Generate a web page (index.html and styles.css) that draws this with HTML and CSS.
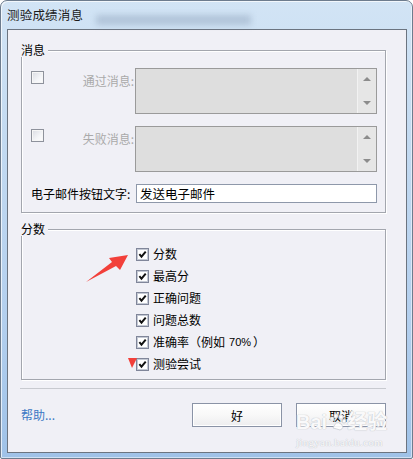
FILE: index.html
```html
<!DOCTYPE html>
<html lang="zh-CN">
<head>
    <meta charset="UTF-8">
    <title>测验成绩消息</title>
    <link rel="stylesheet" href="styles.css">
</head>
<body>
    <div class="window">
        <div class="titlebar">
            <span class="blur-bg"></span>
            <span class="title">测验成绩消息</span>
        </div>

        <div class="client">
            <div class="group group-msg">
                <div class="group-title">消息</div>
                <div class="msg-grid">
                    <div class="msg-label">
                        <span class="cb"></span>
                        <span class="disabled">通过消息:</span>
                    </div>
                    <div class="area">
                        <div class="area-bar"><span class="arr-up"></span><span class="arr-down"></span></div>
                    </div>

                    <div class="msg-label">
                        <span class="cb"></span>
                        <span class="disabled">失败消息:</span>
                    </div>
                    <div class="area">
                        <div class="area-bar"><span class="arr-up"></span><span class="arr-down"></span></div>
                    </div>

                    <div class="email-label">电子邮件按钮文字:</div>
                    <input class="email-input" type="text" value="发送电子邮件">
                </div>
            </div>

            <div class="group group-score">
                <div class="group-title">分数</div>
                <ul class="score-list">
                    <li><span class="cb checked"><svg viewBox="0 0 13 13"><path d="M2.8 6 L5.3 9 L10.3 3"/></svg></span>分数</li>
                    <li><span class="cb checked"><svg viewBox="0 0 13 13"><path d="M2.8 6 L5.3 9 L10.3 3"/></svg></span>最高分</li>
                    <li><span class="cb checked"><svg viewBox="0 0 13 13"><path d="M2.8 6 L5.3 9 L10.3 3"/></svg></span>正确问题</li>
                    <li><span class="cb checked"><svg viewBox="0 0 13 13"><path d="M2.8 6 L5.3 9 L10.3 3"/></svg></span>问题总数</li>
                    <li><span class="cb checked"><svg viewBox="0 0 13 13"><path d="M2.8 6 L5.3 9 L10.3 3"/></svg></span>准确率（例如<span class="latin">70%</span>）</li>
                    <li><span class="cb checked"><svg viewBox="0 0 13 13"><path d="M2.8 6 L5.3 9 L10.3 3"/></svg></span>测验尝试</li>
                </ul>
            </div>

            <div class="separator"></div>

            <div class="footer">
                <a class="help" href="#">帮助...</a>
                <div class="buttons">
                    <button class="btn">好</button>
                    <button class="btn">取消</button>
                </div>
            </div>
        </div>

        <!-- red annotations drawn over the dialog -->
        <svg class="annot" width="413" height="459" viewBox="0 0 413 459">
            <path d="M86 282 L112 262 L109 258 L128 255 L120 270 L116 266 Z" fill="#f2403a"/>
            <path d="M128 358 L137 358 L132 368 Z" fill="#f2403a"/>
        </svg>

        <div class="watermark">
            <div class="wm-logo">Bai<svg class="paw" viewBox="0 0 20 20"><circle cx="5" cy="7" r="2.2"/><circle cx="9" cy="4" r="2.2"/><circle cx="14" cy="5" r="2.2"/><circle cx="17" cy="9" r="2"/><path d="M6 16 Q9 8 14 12 Q18 16 13 18 Q10 17 6 16 Z"/></svg>经验</div>
            <div class="wm-url">jingyan.baidu.com</div>
        </div>
    </div>
</body>
</html>
```

FILE: styles.css
```css
* {
    box-sizing: border-box;
}

body {
    margin: 0;
    width: 413px;
    height: 459px;
    overflow: hidden;
    background: #ffffff;
    font-family: "Noto Sans CJK SC", "Noto Sans", sans-serif;
    font-size: 12px;
    color: #000;
}

.window {
    position: relative;
    width: 413px;
    height: 459px;
    border: 1px solid #6d7c8e;
    border-radius: 7px 7px 2px 2px;
    background: linear-gradient(180deg, #d2e4f5 0%, #c3daf1 30%, #b3cfee 70%, #9fc2e8 100%);
    box-shadow: inset 1px 1px 0 rgba(255,255,255,0.7), inset -1px -1px 0 rgba(255,255,255,0.5);
}

.titlebar {
    position: relative;
    height: 28px;
    padding: 5px 0 0 6px;
}

.blur-bg {
    position: absolute;
    left: 95px;
    top: 14px;
    width: 155px;
    height: 10px;
    background: rgba(120,140,165,0.35);
    filter: blur(3px);
}

.title {
    position: relative;
    font-size: 12.5px;
    line-height: 17px;
    letter-spacing: 0.2px;
    color: #1b1b1b;
}

.client {
    margin-left: 6px;
    width: 400px;
    height: 424px;
    border: 1px solid #6b7480;
    background: #f0f0f6;
}

.group {
    margin-left: 13px;
    width: 365px;
    border: 1px solid #a3a6ae;
    box-shadow: 1px 1px 0 #ffffff, inset 1px 1px 0 #ffffff;
}

.group-msg {
    margin-top: 20px;
    height: 163px;
}

.group-score {
    margin-top: 16px;
    height: 151px;
}

.group-title {
    display: table;
    height: 14px;
    margin: -8px 0 0 -1px;
    padding-right: 3px;
    line-height: 14px;
    background: #f0f0f6;
}

.msg-grid {
    display: grid;
    grid-template-columns: 104px 1fr;
    row-gap: 12px;
    margin: 11px 8px 0 9px;
}

.msg-label {
    display: flex;
    justify-content: space-between;
    align-items: flex-start;
}

.msg-label .cb {
    margin-top: 3px;
}

.msg-label .disabled {
    padding: 5px 1px 0 0;
    line-height: 16px;
    color: #aaaaaa;
}

.area {
    display: flex;
    justify-content: flex-end;
    height: 46px;
    border: 1px solid #9a9a9a;
    background: #dedede;
}

.area-bar {
    display: flex;
    flex-direction: column;
    justify-content: space-between;
    align-items: center;
    width: 19px;
    padding: 8px 0 8px;
    border-left: 1px solid #f2f2f2;
    background: #e6e6e6;
}

.arr-up, .arr-down {
    width: 0;
    height: 0;
    border-left: 4px solid transparent;
    border-right: 4px solid transparent;
}

.arr-up {
    border-bottom: 4px solid #8c8c8c;
}

.arr-down {
    border-top: 4px solid #8c8c8c;
}

.email-label {
    line-height: 19px;
    white-space: nowrap;
}

.email-input {
    height: 19px;
    margin: 0 0 0 1px;
    padding: 0 3px;
    border: 1px solid #8e98aa;
    background: #ffffff;
    font-family: inherit;
    font-size: 12.5px;
    color: #000;
    outline: none;
}

.cb {
    display: inline-block;
    flex: none;
    width: 13px;
    height: 13px;
    border: 1px solid #8e929c;
    background: linear-gradient(135deg, #d9dbe2 0%, #f4f5f8 60%, #fdfdfd 100%);
    box-shadow: inset 0 0 0 1px #f6f6f6;
}

.cb.checked {
    background: #ffffff;
    border-color: #80869a;
    box-shadow: inset 0 0 0 1px #c4c9d4;
}

.cb svg {
    display: block;
    width: 11px;
    height: 11px;
    fill: none;
    stroke: #111;
    stroke-width: 2.3;
}

.score-list {
    list-style: none;
    margin: 7px 0 0 0;
    padding: 0 0 0 114px;
}

.score-list li {
    display: flex;
    align-items: center;
    height: 22px;
    line-height: 22px;
}

.score-list .cb {
    margin-right: 4px;
}

.latin {
    font-family: "Liberation Sans", Arial, sans-serif;
    font-size: 11px;
    margin: 0 2px 0 4px;
}

.separator {
    margin: 8px 0 0 12px;
    width: 366px;
    height: 1px;
    background: #c8cad0;
}

.footer {
    display: flex;
    justify-content: space-between;
    align-items: center;
    margin: 14px 20px 0 13px;
}

.help {
    color: #3a78c4;
    text-decoration: none;
    line-height: 16px;
}

.buttons {
    display: flex;
    gap: 14px;
}

.btn {
    width: 90px;
    height: 24px;
    padding: 0;
    border: 1px solid #8a93a6;
    background: linear-gradient(180deg, #ffffff 0%, #f8f8f8 50%, #ededef 100%);
    box-shadow: inset 0 0 0 1px #ffffff;
    font-family: inherit;
    font-size: 12px;
    color: #000;
}

.annot {
    position: absolute;
    left: -1px;
    top: -1px;
    pointer-events: none;
}

.watermark {
    position: absolute;
    left: 295px;
    top: 410px;
    width: 92px;
    color: rgba(255,255,255,0.92);
    text-shadow: 0 0 1px #c2c5cc, 0 0 1px #c2c5cc;
    pointer-events: none;
}

.wm-logo {
    display: flex;
    align-items: center;
    font-family: "Liberation Sans", "Noto Sans CJK SC", sans-serif;
    font-size: 20px;
    font-weight: bold;
    line-height: 22px;
}

.paw {
    width: 20px;
    height: 20px;
    fill: rgba(255,255,255,0.9);
    stroke: #c2c5cc;
    stroke-width: 0.7;
}

.wm-url {
    margin-top: 3px;
    font-family: "Liberation Serif", serif;
    font-size: 11px;
    line-height: 12px;
    letter-spacing: 0.3px;
}
```
